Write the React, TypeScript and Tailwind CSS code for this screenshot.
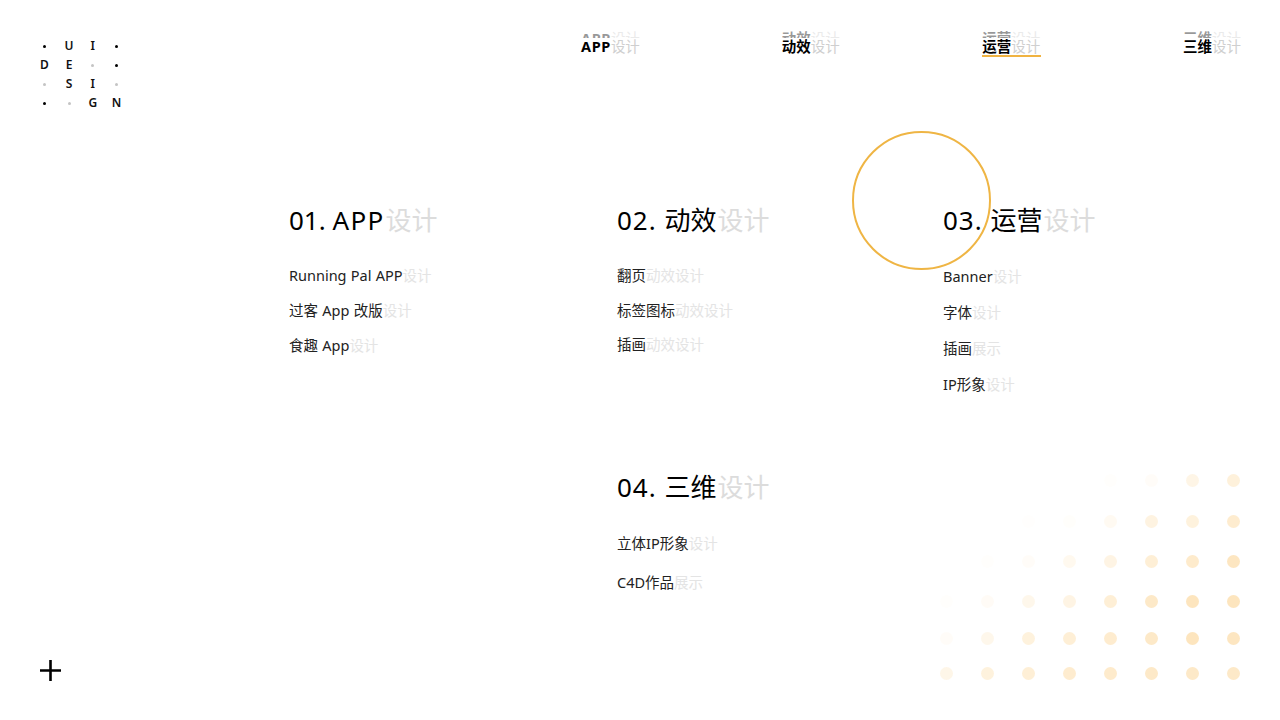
import React from 'react';

const font = { fontFamily: '"Noto Sans", "Noto Sans CJK SC", sans-serif' };

const logoCells = [
  ['dot', 'U', 'I', 'dot'],
  ['D', 'E', 'dim', 'dot'],
  ['dim', 'S', 'I', 'dim'],
  ['dot', 'dim', 'G', 'N'],
];

const navItems = [
  { label: 'APP', active: false },
  { label: '动效', active: false },
  { label: '运营', active: true },
  { label: '三维', active: false },
];

const dotRows = [
  [0, 0, 0, 0, 0.04, 0.1, 0.35, 0.5],
  [0, 0, 0.03, 0.05, 0.18, 0.42, 0.48, 0.68],
  [0, 0.04, 0.1, 0.22, 0.38, 0.58, 0.72, 0.88],
  [0.04, 0.13, 0.28, 0.38, 0.58, 0.78, 0.92, 0.92],
  [0.1, 0.28, 0.48, 0.58, 0.68, 0.78, 0.92, 0.88],
  [0.32, 0.48, 0.58, 0.68, 0.72, 0.78, 0.78, 0.78],
];

const Logo = () => (
  <div className="grid grid-cols-[25px_24px_23.5px_24px] grid-rows-[repeat(4,19px)] -ml-2 mt-[36.5px] w-[97px]">
    {logoCells.flat().map((cell, i) => (
      <div key={i} className="flex items-center justify-center">
        {cell === 'dot' && <span className="w-[3px] h-[3px] rounded-full bg-black" />}
        {cell === 'dim' && <span className="w-[3px] h-[3px] rounded-full bg-[#c4c4c4]" />}
        {cell !== 'dot' && cell !== 'dim' && (
          <span className="text-[12px] leading-none font-semibold text-[#111111]">{cell}</span>
        )}
      </div>
    ))}
  </div>
);

const NavItem = ({ label, active }: { label: string; active: boolean }) => (
  <a className="flex flex-col w-[59px] shrink-0">
    <span className="block h-[8px] overflow-hidden text-[14.5px] leading-[16px] whitespace-nowrap opacity-40">
      <span className={label === 'APP' ? 'font-bold text-black tracking-[0.6px]' : 'font-bold text-black'}>{label}</span>
      <span className="text-[#cccccc]">设计</span>
    </span>
    <span className="block h-[16px] text-[14.5px] leading-[16px] whitespace-nowrap">
      <span className={label === 'APP' ? 'font-bold text-black tracking-[0.6px]' : 'font-bold text-black'}>{label}</span>
      <span className="text-[#cfcfcf]">设计</span>
    </span>
    {active && <span className="block h-[2px] mt-[1px] bg-[#f0b341]" />}
  </a>
);

type Item = [string, string];

const Section = ({
  title,
  items,
  listClass,
}: {
  title: React.ReactNode;
  items: Item[];
  listClass: string;
}) => (
  <section>
    <h2 className="text-[26px] leading-[30px] font-normal text-black whitespace-nowrap">
      {title}
      <span className="ml-[1px] text-[#dcdcdc]">设计</span>
    </h2>
    <ul className={listClass}>
      {items.map(([main, ghost]) => (
        <li key={main} className="text-[14.5px] leading-[20px] font-normal text-[#222222] whitespace-nowrap [word-spacing:0.5px]">
          {main}
          <span className="text-[#e4e4e4]">{ghost}</span>
        </li>
      ))}
    </ul>
  </section>
);

const DotField = () => (
  <div className="absolute left-[940px] top-[474px] grid grid-cols-[repeat(8,41px)] grid-rows-[41px_40px_40px_37px_35px_14px]">
    {dotRows.flat().map((o, i) => (
      <span key={i} className="w-[13px] h-[13px] rounded-full bg-[#fde3b8]" style={{ opacity: o }} />
    ))}
  </div>
);

export default function App() {
  return (
    <div className="relative w-[1280px] h-[720px] overflow-hidden bg-white flex flex-col" style={font}>
      <DotField />
      <div className="absolute left-[852px] top-[131px] w-[139px] h-[139px] rounded-full border-2 border-[#efb544]" />

      <header className="relative flex justify-between h-[205px] pl-[40px] pr-[38px]">
        <Logo />
        <nav className="flex gap-[141.67px] pt-[30px] h-fit">
          {navItems.map((n) => (
            <NavItem key={n.label} {...n} />
          ))}
        </nav>
      </header>

      <main className="relative flex-1 pl-[289px] grid grid-cols-[328px_326px_1fr] grid-rows-[267px_1fr]">
        <Section
          title={
            <>
              01. <span className="tracking-[1.3px]">APP</span>
            </>
          }
          listClass="mt-[30px] flex flex-col gap-[15px]"
          items={[
            ['Running Pal APP', '设计'],
            ['过客 App 改版', '设计'],
            ['食趣 App', '设计'],
          ]}
        />
        <Section
          title={
            <>
              <span className="tracking-[1px]">02. </span>动效
            </>
          }
          listClass="mt-[30px] flex flex-col gap-[14.5px]"
          items={[
            ['翻页', '动效设计'],
            ['标签图标', '动效设计'],
            ['插画', '动效设计'],
          ]}
        />
        <Section
          title={
            <>
              <span className="tracking-[1px]">03. </span>运营
            </>
          }
          listClass="mt-[31px] flex flex-col gap-[16px]"
          items={[
            ['Banner', '设计'],
            ['字体', '设计'],
            ['插画', '展示'],
            ['IP形象', '设计'],
          ]}
        />
        <div />
        <Section
          title={
            <>
              <span className="tracking-[1px]">04. </span>三维
            </>
          }
          listClass="mt-[31px] flex flex-col gap-[19px]"
          items={[
            ['立体IP形象', '设计'],
            ['C4D作品', '展示'],
          ]}
        />
      </main>

      <footer className="relative h-[60px] pl-[40px]">
        <svg width="21" height="21" viewBox="0 0 21 21">
          <path d="M0 10.5H21M10.5 0V21" stroke="#000" strokeWidth="2.6" fill="none" />
        </svg>
      </footer>
    </div>
  );
}
